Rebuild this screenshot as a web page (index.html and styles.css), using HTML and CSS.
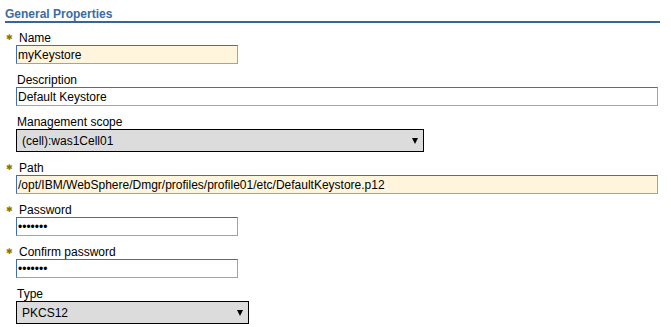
FILE: index.html
```
<!DOCTYPE html>
<html lang="en">
<head>
    <meta charset="UTF-8">
    <title>General Properties</title>
    <link rel="stylesheet" href="styles.css">
</head>
<body>
    <div class="panel">
        <h2 class="title">General Properties</h2>
        <div class="fields">
            <div class="field">
                <label class="label req">Name</label>
                <input class="text short required" type="text" value="myKeystore">
            </div>
            <div class="field">
                <label class="label">Description</label>
                <input class="text long" type="text" value="Default Keystore">
            </div>
            <div class="field">
                <label class="label">Management scope</label>
                <span class="selwrap scope">
                    <select class="sel"><option>(cell):was1Cell01</option></select>
                </span>
            </div>
            <div class="field">
                <label class="label req">Path</label>
                <input class="text long required" type="text" value="/opt/IBM/WebSphere/Dmgr/profiles/profile01/etc/DefaultKeystore.p12">
            </div>
            <div class="field">
                <label class="label req">Password</label>
                <input class="text short" type="password" value="1234567">
            </div>
            <div class="field">
                <label class="label req">Confirm password</label>
                <input class="text short" type="password" value="1234567">
            </div>
            <div class="field">
                <label class="label">Type</label>
                <span class="selwrap type">
                    <select class="sel"><option>PKCS12</option></select>
                </span>
            </div>
        </div>
    </div>
</body>
</html>
```
FILE: styles.css
```
*{padding: 0;
margin: 0;
box-sizing: border-box;}
body{
    font-family: "Liberation Sans", Arial, sans-serif;
    font-size: 12px;
    color: #000;
    background: #fff;
}
.panel{
    padding: 7px 11px 0 5px;
}
.title{
    font-size: 12px;
    font-weight: bold;
    color: #3b6ca2;
    line-height: 14px;
    border-bottom: 2px solid #33669b;
}
.fields{
    padding: 8px 0 0 11px;
    display: flex;
    flex-direction: column;
    gap: 9px;
}
.field{
    display: flex;
    flex-direction: column;
    align-items: flex-start;
}
.label{
    position: relative;
    padding-left: 1px;
    line-height: 14px;
    height: 14px;
}
.req{
    padding-left: 3px;
}
/* required marker */
.req::before{
    content: "\2731";
    position: absolute;
    left: -10px;
    top: 0;
    color: #8b7400;
    font-family: "DejaVu Sans", sans-serif;
    font-size: 8px;
}
.text{
    font-family: "Liberation Sans", Arial, sans-serif;
    font-size: 12px;
    height: 19px;
    padding: 0 1px;
    border: 1px solid #80acd4;
    border-top-color: #44709e;
    border-left-color: #44709e;
    background: #fff;
    color: #000;
    outline: none;
}
.short{ width: 222px; }
.long{ width: 642px; }
.required{ background: #fff5dd; }
.selwrap{
    position: relative;
    display: block;
}
.selwrap::after{
    content: "";
    position: absolute;
    right: 6px;
    top: 9px;
    width: 0;
    height: 0;
    border-left: 3px solid transparent;
    border-right: 3px solid transparent;
    border-top: 6px solid #000;
    pointer-events: none;
}
.sel{
    appearance: none;
    -webkit-appearance: none;
    display: block;
    width: 100%;
    height: 23px;
    font-family: "Liberation Sans", Arial, sans-serif;
    font-size: 12px;
    padding: 0 5px;
    border: 1px solid #000;
    border-radius: 0;
    background: #dcdcdc;
    color: #000;
}
.scope{ width: 408px; }
.type{ width: 233px; }
```
